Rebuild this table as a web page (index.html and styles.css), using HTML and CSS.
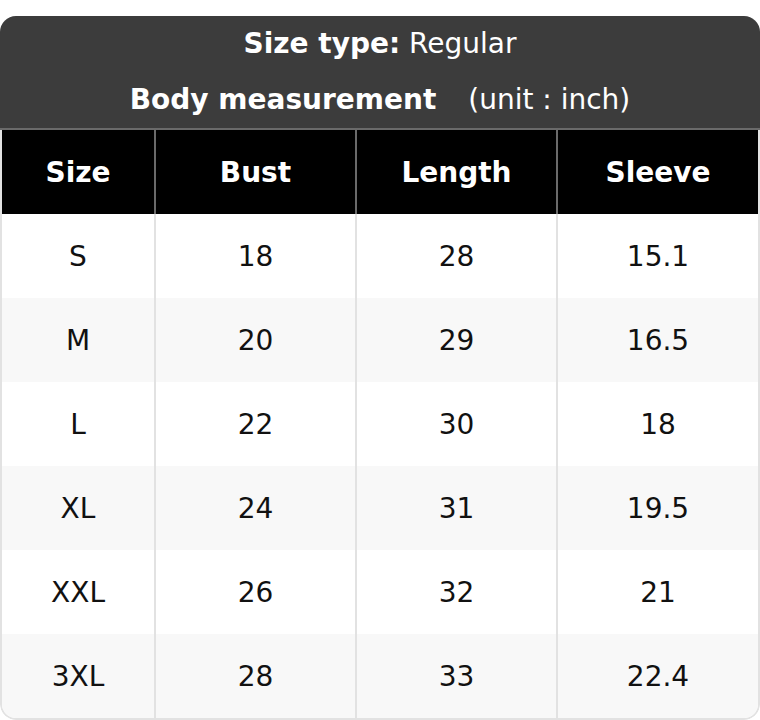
FILE: index.html
```html
<!DOCTYPE html>
<html>
<head>
<meta charset="utf-8">
<link rel="stylesheet" href="styles.css">
</head>
<body>
<div class="chart">
  <div class="title">
    <div class="title-line"><b>Size type:</b> Regular</div>
    <div class="title-line"><b>Body measurement</b><span class="unit">(unit : inch)</span></div>
  </div>
  <div class="table">
    <div class="row head">
      <div class="cell">Size</div><div class="cell">Bust</div><div class="cell">Length</div><div class="cell">Sleeve</div>
    </div>
    <div class="row">
      <div class="cell">S</div><div class="cell">18</div><div class="cell">28</div><div class="cell">15.1</div>
    </div>
    <div class="row alt">
      <div class="cell">M</div><div class="cell">20</div><div class="cell">29</div><div class="cell">16.5</div>
    </div>
    <div class="row">
      <div class="cell">L</div><div class="cell">22</div><div class="cell">30</div><div class="cell">18</div>
    </div>
    <div class="row alt">
      <div class="cell">XL</div><div class="cell">24</div><div class="cell">31</div><div class="cell">19.5</div>
    </div>
    <div class="row">
      <div class="cell">XXL</div><div class="cell">26</div><div class="cell">32</div><div class="cell">21</div>
    </div>
    <div class="row alt">
      <div class="cell">3XL</div><div class="cell">28</div><div class="cell">33</div><div class="cell">22.4</div>
    </div>
  </div>
</div>
</body>
</html>
```
FILE: styles.css
```css
* { box-sizing: border-box; }
html, body { margin: 0; padding: 0; background: #fff; }
body {
  font-family: "DejaVu Sans", "Liberation Sans", sans-serif;
  font-size: 28px;
  color: #111;
}
.chart {
  margin-top: 16px;
  width: 760px;
  border-radius: 16px;
  overflow: hidden;
}
.title {
  background: #3c3c3c;
  color: #fff;
  border-bottom: 2px solid #6a6a6a;
}
.title-line {
  height: 56px;
  line-height: 56px;
  text-align: center;
}
.title-line b { font-weight: bold; }
.unit { margin-left: 32px; }
.table {
  border: 2px solid #e2e2e2;
  border-top: none;
  border-radius: 0 0 16px 16px;
  overflow: hidden;
}
.row {
  display: grid;
  grid-template-columns: 152px 201px 201px 1fr;
  height: 84px;
  background: #fff;
}
.row.alt { background: #f8f8f8; }
.cell {
  display: flex;
  align-items: center;
  justify-content: center;
  border-left: 2px solid #e2e2e2;
}
.cell:first-child { border-left: none; }
.row.head {
  background: #000;
  color: #fff;
  font-weight: bold;
}
.row.head .cell { border-left-color: #6a6a6a; }
```
